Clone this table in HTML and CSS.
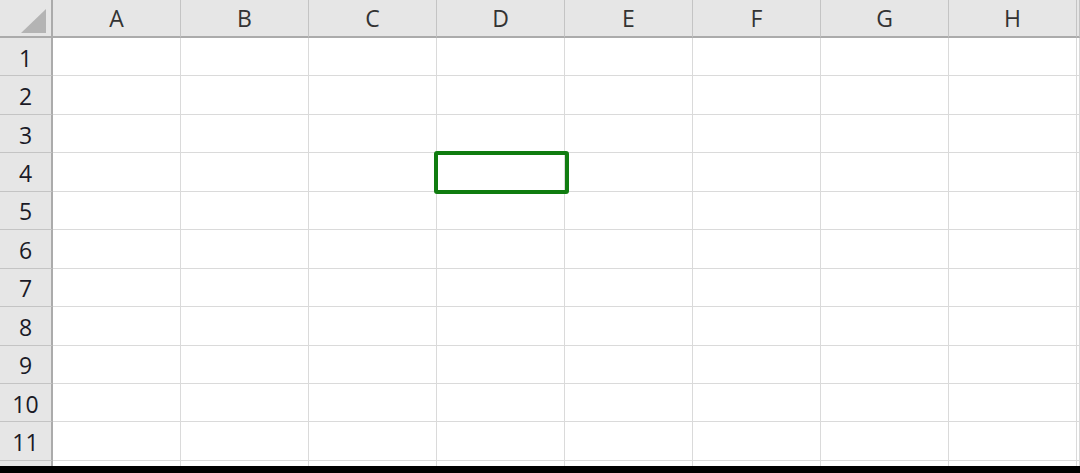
FILE: index.html
```html
<!DOCTYPE html>
<html>
<head>
<meta charset="utf-8">
<link rel="stylesheet" href="styles.css">
</head>
<body>
<div class="sheet">
  <div class="hd corner"><span class="tri"></span></div>
  <div class="hd col">A</div><div class="hd col">B</div><div class="hd col">C</div><div class="hd col">D</div>
  <div class="hd col">E</div><div class="hd col">F</div><div class="hd col">G</div><div class="hd col">H</div><div class="hd col"></div>

  <div class="hd row">1</div><div class="c"></div><div class="c"></div><div class="c"></div><div class="c"></div><div class="c"></div><div class="c"></div><div class="c"></div><div class="c"></div><div class="c"></div>
  <div class="hd row">2</div><div class="c"></div><div class="c"></div><div class="c"></div><div class="c"></div><div class="c"></div><div class="c"></div><div class="c"></div><div class="c"></div><div class="c"></div>
  <div class="hd row">3</div><div class="c"></div><div class="c"></div><div class="c"></div><div class="c"></div><div class="c"></div><div class="c"></div><div class="c"></div><div class="c"></div><div class="c"></div>
  <div class="hd row">4</div><div class="c"></div><div class="c"></div><div class="c"></div><div class="c active"><span class="sel"></span></div><div class="c"></div><div class="c"></div><div class="c"></div><div class="c"></div><div class="c"></div>
  <div class="hd row">5</div><div class="c"></div><div class="c"></div><div class="c"></div><div class="c"></div><div class="c"></div><div class="c"></div><div class="c"></div><div class="c"></div><div class="c"></div>
  <div class="hd row">6</div><div class="c"></div><div class="c"></div><div class="c"></div><div class="c"></div><div class="c"></div><div class="c"></div><div class="c"></div><div class="c"></div><div class="c"></div>
  <div class="hd row">7</div><div class="c"></div><div class="c"></div><div class="c"></div><div class="c"></div><div class="c"></div><div class="c"></div><div class="c"></div><div class="c"></div><div class="c"></div>
  <div class="hd row">8</div><div class="c"></div><div class="c"></div><div class="c"></div><div class="c"></div><div class="c"></div><div class="c"></div><div class="c"></div><div class="c"></div><div class="c"></div>
  <div class="hd row">9</div><div class="c"></div><div class="c"></div><div class="c"></div><div class="c"></div><div class="c"></div><div class="c"></div><div class="c"></div><div class="c"></div><div class="c"></div>
  <div class="hd row">10</div><div class="c"></div><div class="c"></div><div class="c"></div><div class="c"></div><div class="c"></div><div class="c"></div><div class="c"></div><div class="c"></div><div class="c"></div>
  <div class="hd row">11</div><div class="c"></div><div class="c"></div><div class="c"></div><div class="c"></div><div class="c"></div><div class="c"></div><div class="c"></div><div class="c"></div><div class="c"></div>
  <div class="hd row"></div><div class="c"></div><div class="c"></div><div class="c"></div><div class="c"></div><div class="c"></div><div class="c"></div><div class="c"></div><div class="c"></div><div class="c"></div>
</div>
</body>
</html>
```
FILE: styles.css
```css
html, body {
  margin: 0;
  padding: 0;
  background: #000;
}
.sheet {
  width: 1080px;
  height: 466px;
  overflow: hidden;
  background: #fff;
  display: grid;
  grid-template-columns: 53px repeat(8, 128px) 3px;
  grid-template-rows: 38px repeat(12, 38.45px);
  font-family: "Open Sans", "Noto Sans", sans-serif;
}
.hd {
  background: #e6e6e6;
  box-sizing: border-box;
  display: flex;
  align-items: center;
  justify-content: center;
  font-size: 23px;
  color: #333;
}
.col {
  border-right: 1px solid #c4c4c4;
  border-bottom: 2px solid #ababab;
}
.corner {
  position: relative;
  border-right: 2px solid #ababab;
  border-bottom: 2px solid #ababab;
}
.tri {
  position: absolute;
  left: 21px;
  top: 9px;
  width: 25px;
  height: 24px;
  background: #b4b4b4;
  clip-path: polygon(100% 0, 100% 100%, 0 100%);
}
.row {
  border-right: 2px solid #ababab;
  border-bottom: 1px solid #c4c4c4;
  color: #1a1a26;
  padding-top: 2px;
}
.c {
  box-sizing: border-box;
  border-right: 1px solid #dadada;
  border-bottom: 1px solid #dadada;
}
.active {
  position: relative;
}
.sel {
  position: absolute;
  left: -3px;
  top: -2px;
  right: -5px;
  bottom: -3px;
  border: 4px solid #107c10;
  border-radius: 3px;
  z-index: 2;
}
```
